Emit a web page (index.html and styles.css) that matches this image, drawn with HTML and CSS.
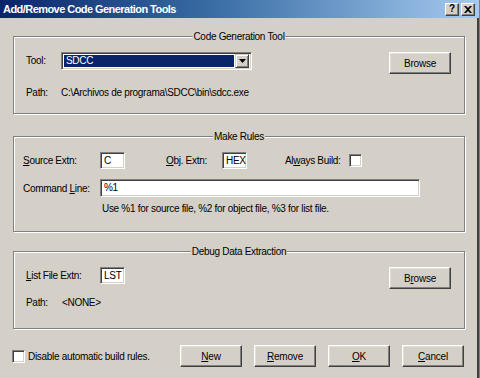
FILE: index.html
```html
<!DOCTYPE html>
<html>
<head>
<meta charset="utf-8">
<link rel="stylesheet" href="styles.css">
</head>
<body>
<div class="window">
  <div class="titlebar">
    <span class="title">Add/Remove Code Generation Tools</span>
    <div class="tb-buttons">
      <span class="tb-btn">?</span>
      <span class="tb-btn">
        <svg width="8" height="7" viewBox="0 0 8 7"><path d="M0 0h2l2 2 2-2h2L5 3.5 8 7H6L4 5 2 7H0l3-3.5z" fill="#000"/></svg>
      </span>
    </div>
  </div>
  <div class="content">
    <div class="group g1">
      <span class="legend">Code Generation Tool</span>
      <div class="row top">
        <span class="lbl w-tool h18">Tool:</span>
        <div class="combo">
          <span class="combo-text"><span class="sel">SDCC</span></span>
          <span class="combo-btn"><svg width="7" height="4" viewBox="0 0 7 4"><path d="M0 0h7L3.5 4z" fill="#000"/></svg></span>
        </div>
        <button class="btn push-right">Browse</button>
      </div>
      <div class="row r-path">
        <span class="lbl w-tool">Path:</span>
        <span>C:\Archivos de programa\SDCC\bin\sdcc.exe</span>
      </div>
    </div>

    <div class="group g2">
      <span class="legend">Make Rules</span>
      <div class="row">
        <span class="lbl w-src"><u>S</u>ource Extn:</span>
        <span class="field small">C</span>
        <span class="lbl w-obj"><u>O</u>bj. Extn:</span>
        <span class="field small">HEX</span>
        <span class="lbl w-always">Al<u>w</u>ays Build:</span>
        <span class="check"></span>
      </div>
      <div class="row r-cmd">
        <span class="lbl w-src">Command <u>L</u>ine:</span>
        <span class="field wide">%1</span>
      </div>
      <div class="row r-help">
        <span>Use %1 for source file, %2 for object file, %3 for list file.</span>
      </div>
    </div>

    <div class="group g3">
      <span class="legend">Debug Data Extraction</span>
      <div class="row top">
        <span class="lbl w-list h17"><u>L</u>ist File Extn:</span>
        <span class="field small">LST</span>
        <button class="btn push-right">B<u>r</u>owse</button>
      </div>
      <div class="row r-path3">
        <span class="lbl w-path3">Path:</span>
        <span>&lt;NONE&gt;</span>
      </div>
    </div>

    <div class="footer">
      <span class="check"></span>
      <span class="foot-lbl">Disable automatic build rules.</span>
      <div class="foot-buttons">
        <button class="btn"><u>N</u>ew</button>
        <button class="btn"><u>R</u>emove</button>
        <button class="btn"><u>O</u>K</button>
        <button class="btn"><u>C</u>ancel</button>
      </div>
    </div>
  </div>
</div>
</body>
</html>
```
FILE: styles.css
```css
* { box-sizing: border-box; }
html, body { margin: 0; padding: 0; }
body {
  width: 480px;
  height: 378px;
  background: #d4d0c8;
  font-family: "Liberation Sans", Arial, sans-serif;
  font-size: 10px;
  letter-spacing: -0.3px;
  color: #000;
  overflow: hidden;
}
.window {
  width: 480px;
  height: 378px;
  border-right: 1px solid #808080;
  box-shadow: inset -2px 0 0 #404040;
}
.titlebar {
  height: 18px;
  display: flex;
  align-items: center;
  background: linear-gradient(to right, #0a246a 0%, #3a6ea5 45%, #a6caf0 100%);
  padding-left: 3px;
}
.title {
  color: #fff;
  font-weight: bold;
  font-size: 11px;
  font-family: "Liberation Sans", Arial, sans-serif;
  letter-spacing: -0.55px;
}
.tb-buttons {
  margin-left: auto;
  margin-right: 4px;
  display: flex;
  gap: 2px;
}
.tb-btn {
  width: 14px;
  height: 13px;
  background: #d4d0c8;
  border: 1px solid;
  border-color: #fff #404040 #404040 #fff;
  box-shadow: inset -1px -1px 0 #808080;
  display: flex;
  align-items: center;
  justify-content: center;
  font-weight: bold;
  font-size: 10px;
  letter-spacing: 0;
  line-height: 1;
}
.content {
  padding: 0 14px 0 13px;
}
.group {
  position: relative;
  border: 1px solid #808080;
  box-shadow: 1px 1px 0 #fff, inset 1px 1px 0 #fff;
  padding: 0 13px 0 12px;
}
.legend {
  position: absolute;
  top: -7px;
  left: 50%;
  transform: translateX(-50%);
  background: #d4d0c8;
  padding: 0 1px;
  line-height: 13px;
  white-space: nowrap;
}
.g1 { height: 78px; margin-top: 18px; padding-top: 15px; }
.g2 { height: 96px; margin-top: 22px; padding-top: 15px; padding-left: 9px; }
.g3 { height: 78px; margin-top: 19px; padding-top: 15px; }
.row {
  display: flex;
  align-items: center;
  white-space: nowrap;
}
.row.top { align-items: flex-start; }
.h18 { line-height: 18px; }
.h17 { line-height: 17px; }
.lbl { flex: none; white-space: nowrap; }
.w-tool { width: 35px; }
.w-src { width: 77px; }
.w-obj { width: 56px; margin-left: 41px; }
.w-always { width: 64px; margin-left: 38px; }
.w-list { width: 74px; }
.w-path3 { width: 36px; }
.push-right { margin-left: auto; }
.r-path { margin-top: 13px; }
.r-cmd { margin-top: 10px; }
.r-help { margin-top: 6px; padding-left: 79px; }
.r-path3 { margin-top: 8px; }

.combo {
  width: 191px;
  height: 18px;
  display: flex;
  background: #fff;
  border: 1px solid;
  border-color: #808080 #fff #fff #808080;
  box-shadow: inset 1px 1px 0 #404040, inset -1px -1px 0 #d4d0c8;
  padding: 2px;
}
.combo-text {
  flex: 1;
  display: flex;
  padding-right: 1px;
}
.sel {
  flex: 1;
  background: #0a246a;
  color: #fff;
  padding-left: 2px;
  line-height: 12px;
}
.combo-btn {
  width: 14px;
  background: #d4d0c8;
  border: 1px solid;
  border-color: #d4d0c8 #404040 #404040 #d4d0c8;
  box-shadow: inset 1px 1px 0 #fff, inset -1px -1px 0 #808080;
  display: flex;
  align-items: center;
  justify-content: center;
  margin-top: -1px;
  margin-bottom: -1px;
}
.field {
  height: 17px;
  background: #fff;
  border: 1px solid;
  border-color: #808080 #fff #fff #808080;
  box-shadow: inset 1px 1px 0 #404040, inset -1px -1px 0 #d4d0c8;
  padding: 1px 2px 0 3px;
  line-height: 13px;
  flex: none;
}
.small { width: 25px; }
.wide { width: 320px; height: 18px; }
.check {
  width: 13px;
  height: 13px;
  background: #fff;
  border: 1px solid;
  border-color: #808080 #fff #fff #808080;
  box-shadow: inset 1px 1px 0 #404040, inset -1px -1px 0 #d4d0c8;
  flex: none;
}
.btn {
  font-family: "Liberation Sans", Arial, sans-serif;
  font-size: 10px;
  letter-spacing: -0.2px;
  color: #000;
  width: 62px;
  height: 22px;
  background: #d4d0c8;
  border: 1px solid;
  border-color: #fff #404040 #404040 #fff;
  box-shadow: inset -1px -1px 0 #808080, inset 1px 1px 0 #e4e0d8;
  padding: 0;
  flex: none;
}
.footer {
  display: flex;
  align-items: center;
  margin-top: 16px;
  margin-left: -1px;
}
.foot-lbl { margin-left: 3px; }
.foot-buttons {
  margin-left: auto;
  display: flex;
  gap: 12px;
  margin-right: 1px;
}
```
